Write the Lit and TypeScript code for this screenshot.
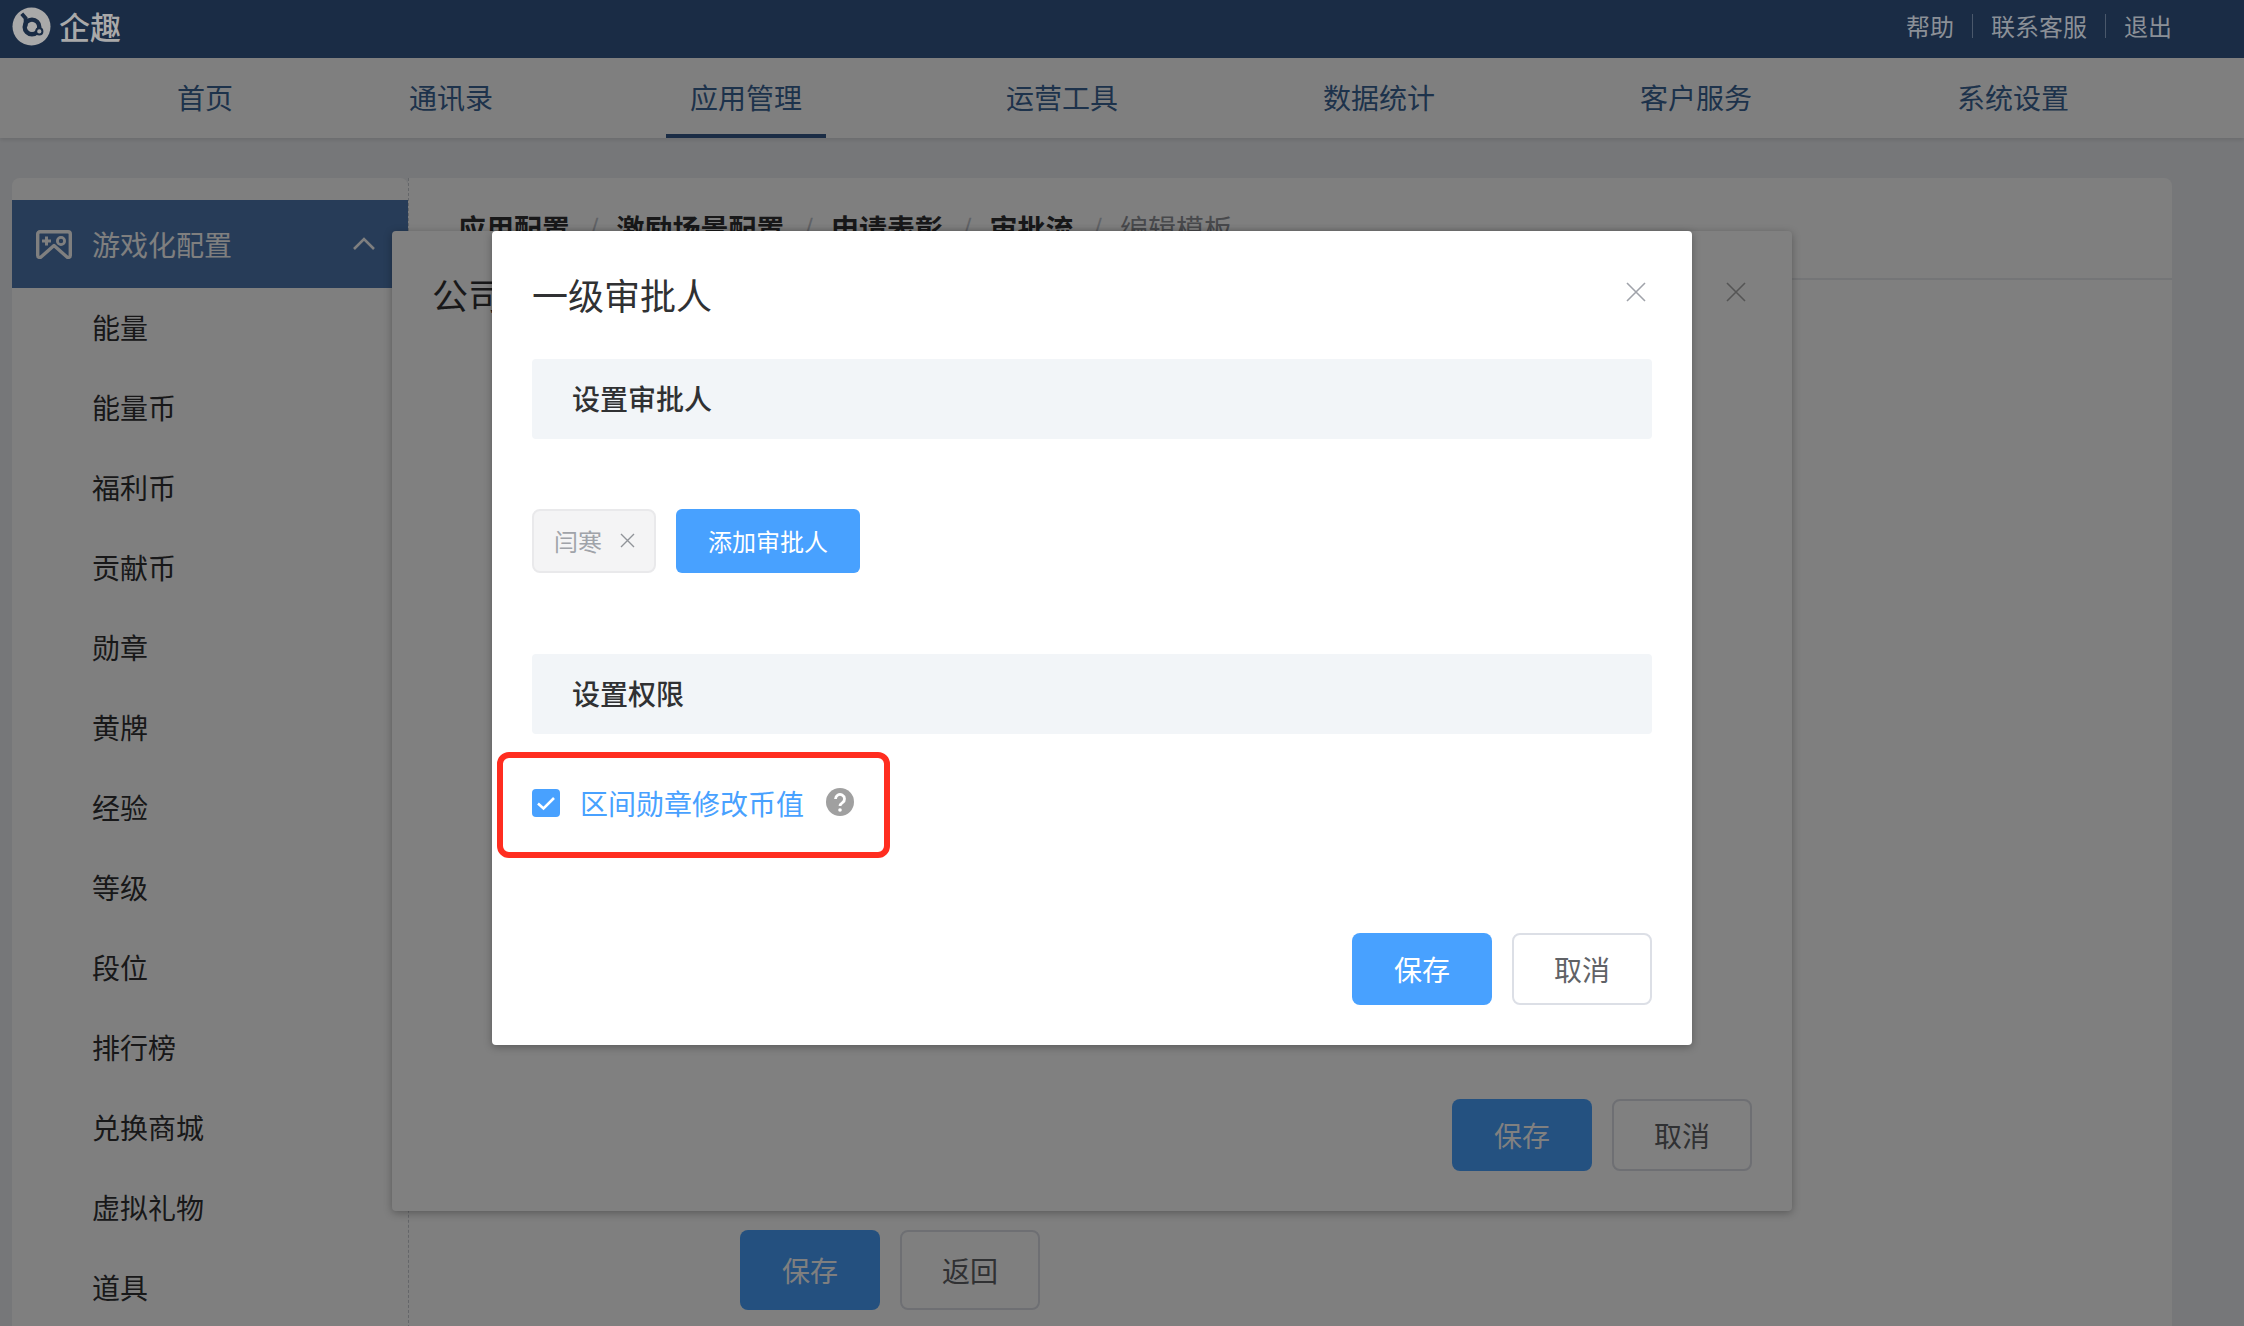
import { LitElement, html, css } from 'lit';
import { customElement } from 'lit/decorators.js';

// gap = space before the item, the menu is not evenly spaced in the original
const NAV = [
  { label: '首页', gap: 153 },
  { label: '通讯录', gap: 128 },
  { label: '应用管理', gap: 149, active: true },
  { label: '运营工具', gap: 156 },
  { label: '数据统计', gap: 157 },
  { label: '客户服务', gap: 157 },
  { label: '系统设置', gap: 157 },
];

const SIDE_ITEMS = ['能量', '能量币', '福利币', '贡献币', '勋章', '黄牌', '经验', '等级', '段位', '排行榜', '兑换商城', '虚拟礼物', '道具'];

const CRUMBS = ['应用配置', '激励场景配置', '申请表彰', '审批流'];

const closeIcon = html`<svg class="close" viewBox="0 0 20 20" fill="none" stroke="currentColor" stroke-width="1.6"><path d="M1 1l18 18M19 1L1 19" /></svg>`;

@customElement('app-root')
export class AppRoot extends LitElement {
  static styles = css`
    :host {
      display: block;
      position: relative;
      width: 2244px;
      height: 1326px;
      overflow: hidden;
      background: #edeff3;
      font-family: "Noto Sans CJK SC", "Liberation Sans", sans-serif;
      font-size: 28px;
      color: #303133;
    }

    .topbar {
      position: relative;
      z-index: 3;
      height: 58px;
      box-sizing: border-box;
      background: #1a2c45;
      display: flex;
      align-items: center;
      justify-content: space-between;
      padding: 0 72px 6px 12px;
    }

    .brand {
      display: flex;
      align-items: center;
      gap: 8px;
      color: #a9a9a9;
      font-size: 31px;
      font-weight: 500;
      line-height: 38px;
    }

    .brand svg {
      width: 39px;
      height: 39px;
    }

    .links {
      display: flex;
      align-items: center;
      color: #8b9097;
      font-size: 24px;
      line-height: 34px;
    }

    .links i {
      width: 1px;
      height: 24px;
      margin: 0 18px;
      background: #4a586b;
    }

    .nav {
      height: 80px;
      display: flex;
      background: #fff;
      box-shadow: 0 2px 4px rgba(0, 0, 0, 0.1);
      color: #3a6596;
    }

    .nav-item {
      height: 80px;
      box-sizing: border-box;
      padding: 0 24px;
      line-height: 78px;
    }

    .nav-item.active {
      border-bottom: 4px solid #34588a;
    }

    .content {
      display: flex;
      padding: 40px 72px 0 12px;
    }

    .sidebar {
      width: 396px;
      flex: none;
      box-sizing: border-box;
      padding-top: 22px;
      background: #fff;
      border-radius: 8px 8px 0 0;
    }

    .group {
      height: 88px;
      display: flex;
      align-items: center;
      padding: 0 32px 0 24px;
      background: #4e78b0;
      color: #fff;
    }

    .group .game {
      width: 36px;
      height: 29px;
      margin-right: 20px;
    }

    .group span {
      flex: 1;
    }

    .group .chevron {
      width: 24px;
      height: 14px;
    }

    .side-item {
      height: 80px;
      line-height: 79px;
      padding-left: 80px;
    }

    .main {
      flex: 1;
      background: #fff;
      border-left: 1px dashed #c9ccd2;
      border-radius: 0 8px 0 0;
    }

    .crumbs {
      height: 102px;
      box-sizing: border-box;
      padding: 30px 0 0 49px;
      display: flex;
      line-height: 40px;
      font-weight: 700;
      border-bottom: 2px solid #e8eaee;
    }

    .crumbs b {
      width: 46.500px;
      text-align: center;
      font-weight: 400;
      color: #c0c4cc;
    }

    .crumbs .current {
      font-weight: 400;
      color: #909399;
    }

    .main-actions {
      display: flex;
      gap: 20px;
      padding: 950px 0 0 331px;
    }

    .main-actions .btn {
      height: 80px;
    }

    .btn {
      width: 140px;
      height: 72px;
      box-sizing: border-box;
      display: flex;
      align-items: center;
      justify-content: center;
      border-radius: 8px;
      line-height: 40px;
    }

    .btn.primary {
      background: #48a1ff;
      color: #fff;
    }

    .btn.plain {
      background: #fff;
      border: 2px solid #dcdfe6;
      color: #606266;
    }

    .overlay {
      position: absolute;
      inset: 0;
      z-index: 1;
      background: rgba(0, 0, 0, 0.5);
    }

    .dialog {
      position: absolute;
      z-index: 2;
      box-sizing: border-box;
      display: flex;
      flex-direction: column;
      background: #fff;
      border-radius: 4px;
      box-shadow: 0 2px 8px rgba(0, 0, 0, 0.3);
    }

    .dialog.back {
      left: 392px;
      top: 231px;
      width: 1400px;
      height: 980px;
      padding: 40px;
      background: #808080;
      color: #181819;
    }

    .dialog.back .close {
      color: #555;
    }

    .dialog.back .btn.primary {
      background: #245180;
      color: #808080;
    }

    .dialog.back .btn.plain {
      background: transparent;
      border-color: #6e6f73;
      color: #303133;
    }

    .dialog.front {
      left: 492px;
      top: 231px;
      width: 1200px;
      height: 814px;
      padding: 40px;
    }

    .head {
      display: flex;
      align-items: flex-start;
      justify-content: space-between;
      height: 48px;
      font-size: 36px;
      line-height: 46px;
    }

    .close {
      width: 20px;
      height: 20px;
      margin: 11px 6px 0 0;
      color: #a0a3aa;
    }

    .bar {
      height: 80px;
      box-sizing: border-box;
      padding-left: 40px;
      line-height: 78px;
      font-weight: 500;
      background: #f2f5f8;
      border-radius: 4px;
    }

    .first-bar {
      margin-top: 40px;
    }

    .approvers {
      display: flex;
      gap: 20px;
      margin: 70px 0 81px;
    }

    .tag {
      width: 124px;
      height: 64px;
      box-sizing: border-box;
      display: flex;
      align-items: center;
      padding: 0 0 2px 20px;
      background: #f4f4f5;
      border: 2px solid #e9e9eb;
      border-radius: 8px;
      color: #a0a3a9;
      font-size: 24px;
    }

    .tag svg {
      width: 15px;
      height: 15px;
      margin-left: 18px;
      color: #909399;
    }

    .add {
      width: 184px;
      height: 64px;
      box-sizing: border-box;
      padding-bottom: 2px;
      display: flex;
      align-items: center;
      justify-content: center;
      background: #48a1ff;
      border-radius: 6px;
      color: #fff;
      font-size: 24px;
    }

    .perm {
      display: flex;
      align-items: center;
      margin-top: 55px;
      height: 28px;
      color: #48a1ff;
      line-height: 28px;
    }

    .check {
      width: 28px;
      height: 28px;
      margin-right: 20px;
      background: #48a1ff;
      border-radius: 4px;
    }

    .help {
      width: 28px;
      height: 28px;
      margin: -2px 0 0 22px;
    }

    .actions {
      display: flex;
      justify-content: flex-end;
      gap: 20px;
      margin-top: auto;
    }

    .marker {
      position: absolute;
      z-index: 2;
      left: 497px;
      top: 752px;
      width: 393px;
      height: 106px;
      box-sizing: border-box;
      border: 6px solid #ff2d20;
      border-radius: 12px;
    }
  `;

  render() {
    return html`
      <div class="topbar">
        <div class="brand">
          <svg viewBox="0 0 40 40">
            <circle cx="20" cy="20" r="19.5" fill="#a9a9a9" />
            <path d="M10 7l4 4.500v8.500" stroke="#1a2c45" stroke-width="4" fill="none" />
            <circle cx="20.500" cy="20.500" r="7.500" fill="none" stroke="#1a2c45" stroke-width="4.500" />
            <circle cx="28" cy="25" r="3.200" fill="#a9a9a9" stroke="#1a2c45" stroke-width="2" />
          </svg>
          企趣
        </div>
        <div class="links">帮助<i></i>联系客服<i></i>退出</div>
      </div>

      <div class="nav">
        ${NAV.map(
          (n) => html`<div class="nav-item ${n.active ? 'active' : ''}" style="margin-left:${n.gap}px">${n.label}</div>`,
        )}
      </div>

      <div class="content">
        <div class="sidebar">
          <div class="group">
            <svg class="game" viewBox="0 0 36 29" fill="none" stroke="currentColor" stroke-width="3.400" stroke-linejoin="round">
              <path d="M4 1.700h28a2.300 2.300 0 0 1 2.300 2.300v21.500a2 2 0 0 1-3.300 1.500L18 15.500 5 27a2 2 0 0 1-3.300-1.500V4A2.300 2.300 0 0 1 4 1.700z" />
              <path d="M6 11h9M10.500 6.500v9" stroke-width="3" />
              <circle cx="25" cy="11" r="3.600" stroke-width="2.800" />
            </svg>
            <span>游戏化配置</span>
            <svg class="chevron" viewBox="0 0 24 14" fill="none" stroke="currentColor" stroke-width="2.600"><path d="M2 12L12 2l10 10" /></svg>
          </div>
          ${SIDE_ITEMS.map((s) => html`<div class="side-item">${s}</div>`)}
        </div>

        <div class="main">
          <div class="crumbs">
            ${CRUMBS.map((c) => html`<span>${c}</span><b>/</b>`)}
            <span class="current">编辑模板</span>
          </div>
          <div class="main-actions">
            <div class="btn primary">保存</div>
            <div class="btn plain">返回</div>
          </div>
        </div>
      </div>

      <div class="overlay"></div>

      <div class="dialog back">
        <div class="head">公司${closeIcon}</div>
        <div class="actions">
          <div class="btn primary">保存</div>
          <div class="btn plain">取消</div>
        </div>
      </div>

      <div class="dialog front">
        <div class="head">一级审批人${closeIcon}</div>
        <div class="bar first-bar">设置审批人</div>
        <div class="approvers">
          <div class="tag">
            闫寒
            <svg viewBox="0 0 15 15" fill="none" stroke="currentColor" stroke-width="1.400"><path d="M1 1l13 13M14 1L1 14" /></svg>
          </div>
          <div class="add">添加审批人</div>
        </div>
        <div class="bar">设置权限</div>
        <div class="perm">
          <svg class="check" viewBox="0 0 28 28" fill="none" stroke="#fff" stroke-width="2.600"><path d="M6 14.500l5.500 5L22 9" /></svg>
          区间勋章修改币值
          <svg class="help" viewBox="0 0 28 28">
            <circle cx="14" cy="14" r="14" fill="#a0a0a0" />
            <path d="M9.500 11a4.500 4.500 0 1 1 7 3.700c-1.500 1-2.500 1.700-2.500 3.300" fill="none" stroke="#fff" stroke-width="2.800" />
            <circle cx="14" cy="22" r="1.800" fill="#fff" />
          </svg>
        </div>
        <div class="actions">
          <div class="btn primary">保存</div>
          <div class="btn plain">取消</div>
        </div>
      </div>

      <div class="marker"></div>
    `;
  }
}
